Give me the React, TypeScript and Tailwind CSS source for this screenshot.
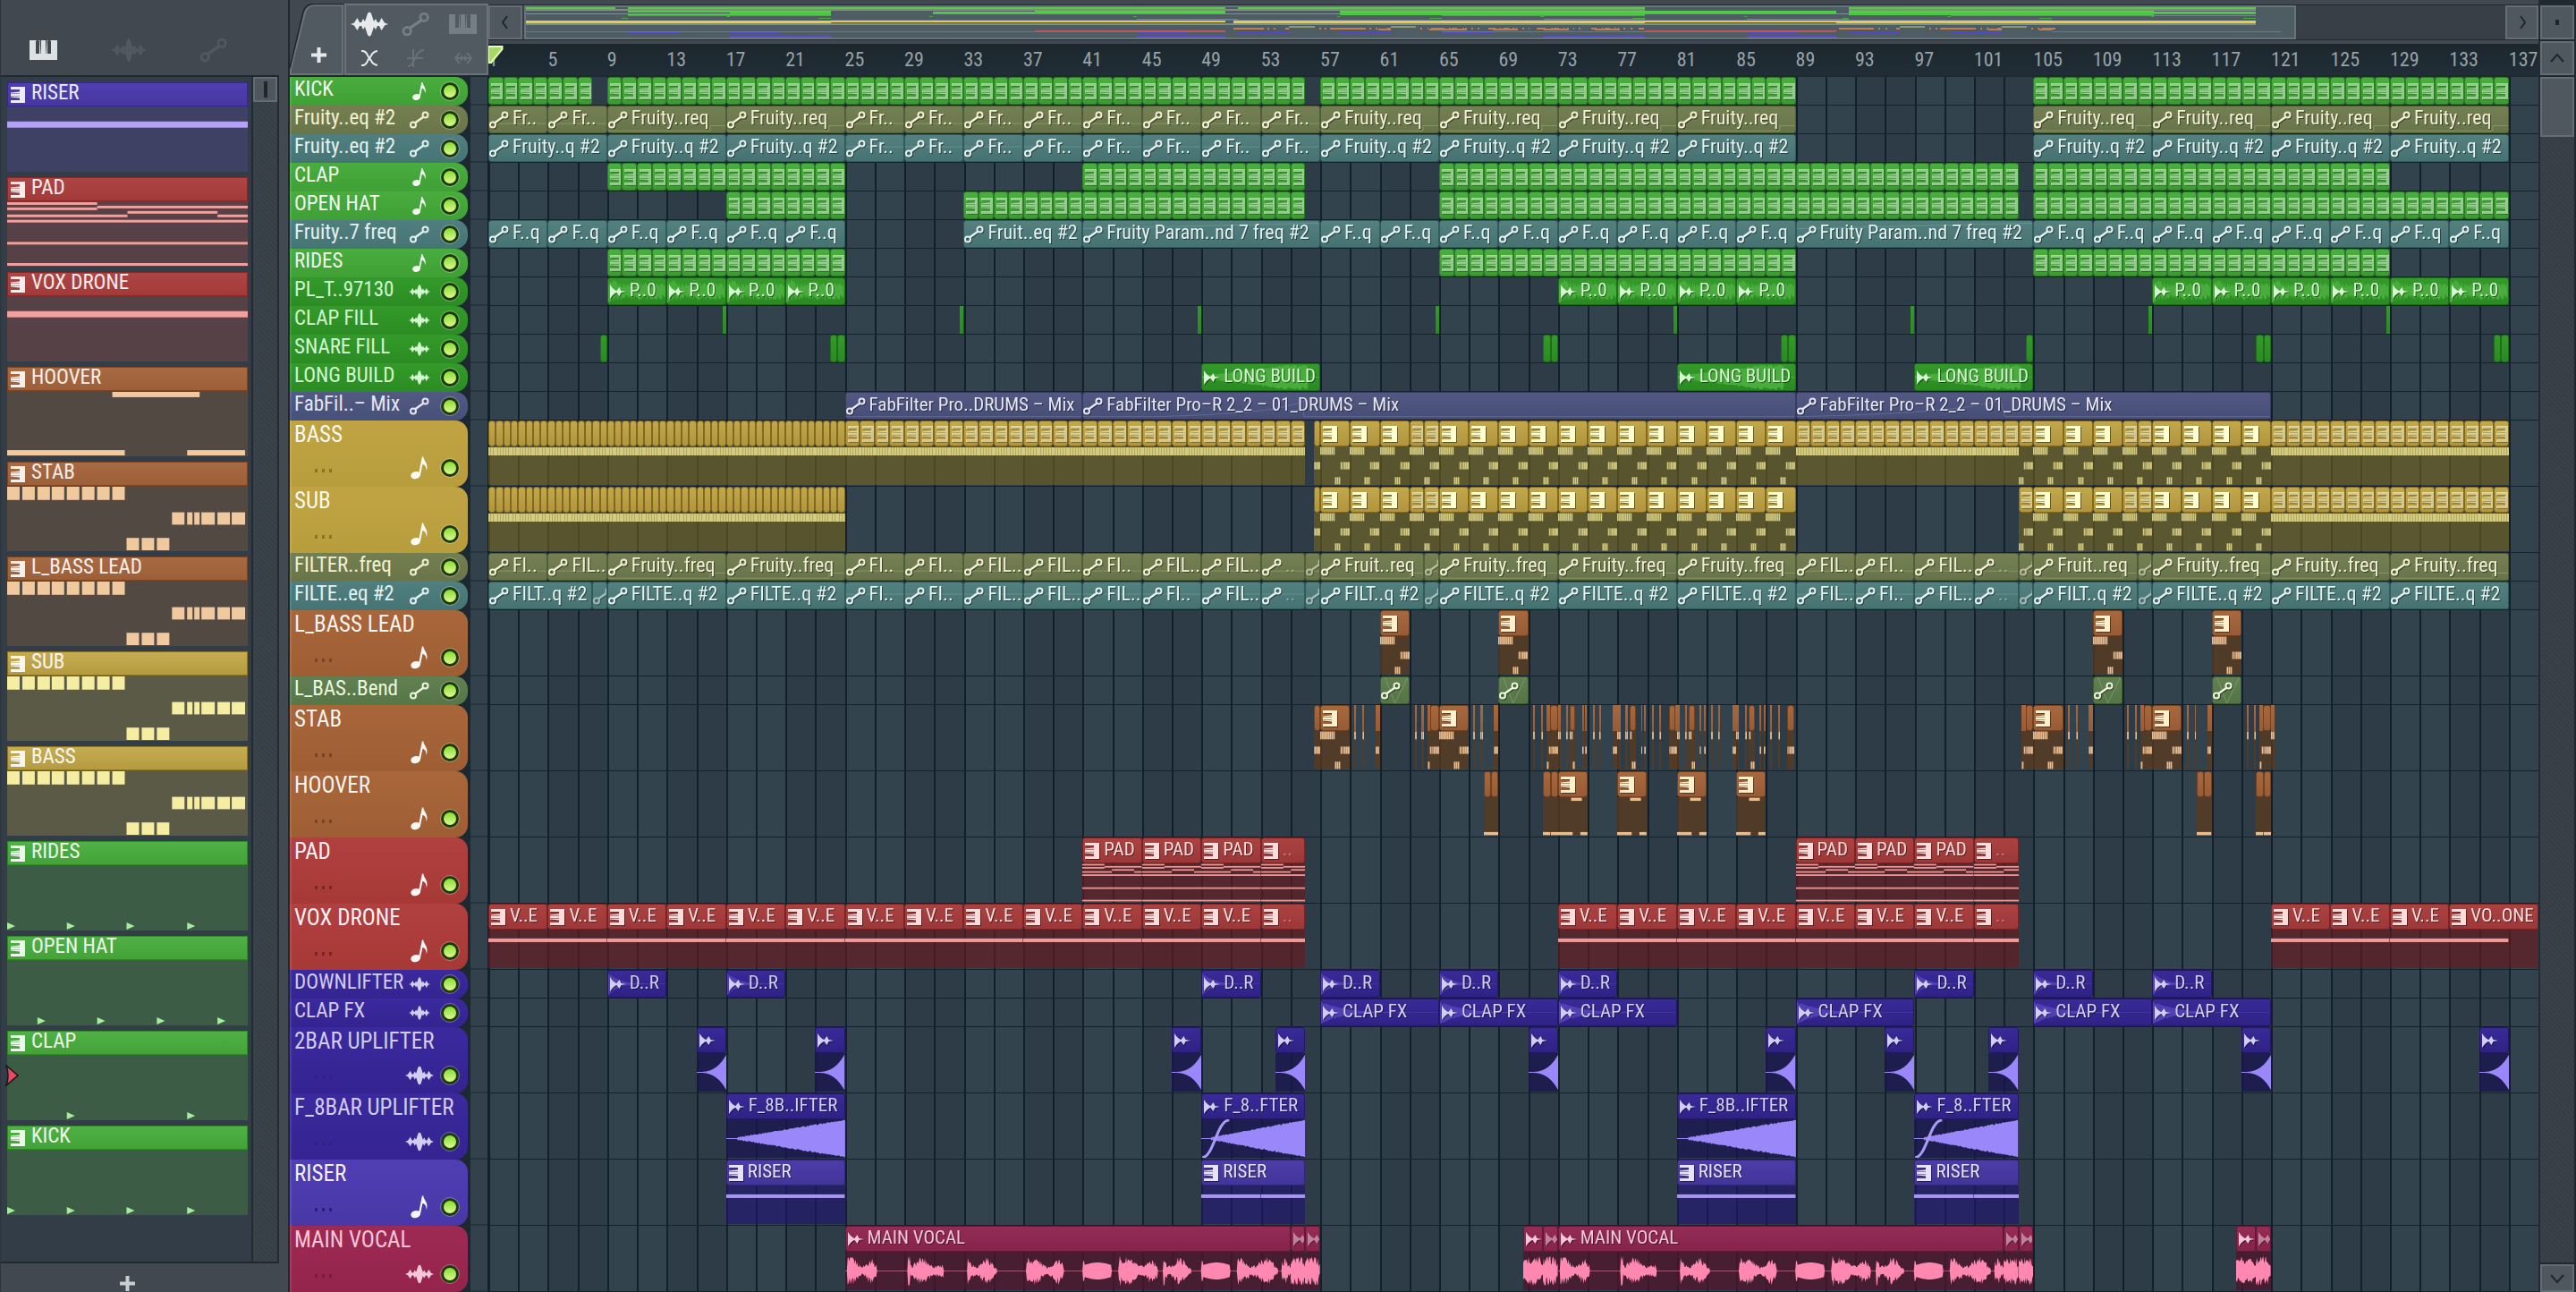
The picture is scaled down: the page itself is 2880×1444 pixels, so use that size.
import { ReactNode } from "react"
import clsx from "clsx"

type Kind = "pattern" | "auto" | "audio"
type Art = "bassline" | "dense" | "hoover" | "low" | "pad" | "hold" | "sweep" | "cone" | "vocal"

interface Clip {
    start: number,
    end: number,
    label?: string,
    art?: Art,
    fade?: boolean,
}

interface Track {
    name: string,
    kind: Kind,
    theme: string,
    tall?: boolean,
    clips: Clip[],
}

const BARS = 138

const THEMES: Record<string, { head: string, clip: string, body: string, note: string, text: string, dots: string, mini: string }> = {
    green: { head: "bg-linear-to-b from-[#49ad3e] to-[#3fa035]", clip: "bg-linear-to-b from-[#4bae40] to-[#3d9a33] border-[#2a7d22]", body: "bg-[#3d5c46]", note: "text-[#a4ee9c]", text: "text-[#d6ffd0]", dots: "bg-[#2a7d22]", mini: "#55c94b" },
    leaf: { head: "bg-linear-to-b from-[#339a2a] to-[#2b8c23]", clip: "bg-linear-to-b from-[#339a2a] to-[#2b8a23] border-[#1f6e19]", body: "bg-[#3d5c46]", note: "text-[#55c048]", text: "text-[#d4f8cf]", dots: "bg-[#1f6e19]", mini: "#3fae3c" },
    olive: { head: "bg-linear-to-b from-[#747f51] to-[#697548]", clip: "bg-linear-to-b from-[#757f53] to-[#67744a] border-[#525e37]", body: "bg-[#5a5a46]", note: "text-[#98a26e]", text: "text-[#f2f0d2]", dots: "bg-[#525e37]", mini: "#7f8c74" },
    teal: { head: "bg-linear-to-b from-[#517f80] to-[#457474]", clip: "bg-linear-to-b from-[#54807f] to-[#467372] border-[#315a5a]", body: "bg-[#3d5c5c]", note: "text-[#709c9b]", text: "text-[#e2f2f0]", dots: "bg-[#315a5a]", mini: "#6b9797" },
    slate: { head: "bg-linear-to-b from-[#525a83] to-[#465078]", clip: "bg-linear-to-b from-[#525882] to-[#474e76] border-[#363c60]", body: "bg-[#3d4166]", note: "text-[#6c739e]", text: "text-[#e4e6f4]", dots: "bg-[#363c60]", mini: "#6a7488" },
    gold: { head: "bg-linear-to-b from-[#c0a443] to-[#b89d3c]", clip: "bg-linear-to-b from-[#c2a84c] to-[#b0953e] border-[#84691c]", body: "bg-[#7c691c]/55", note: "text-[#d3cb82]", text: "text-[#ffffd0]", dots: "bg-[#8c741c]", mini: "#e6ca54" },
    rust: { head: "bg-linear-to-b from-[#a9663a] to-[#9e5e34]", clip: "bg-linear-to-b from-[#a8683e] to-[#975c36] border-[#75401c]", body: "bg-[#5c391f]/75", note: "text-[#e8bd90]", text: "text-[#fff0cc]", dots: "bg-[#7c4420]", mini: "#c87c4c" },
    moss: { head: "bg-linear-to-b from-[#628052] to-[#567646]", clip: "bg-linear-to-b from-[#628052] to-[#557445] border-[#3f5c30]", body: "bg-[#3d5c46]", note: "text-[#86a176]", text: "text-[#ecf8dc]", dots: "bg-[#3f5c30]", mini: "#8c9c72" },
    red: { head: "bg-linear-to-b from-[#b14040] to-[#a63936]", clip: "bg-linear-to-b from-[#ab4242] to-[#9d3838] border-[#7d2222]", body: "bg-[#691a20]/65", note: "text-[#f09a98]", text: "text-[#ffdcdc]", dots: "bg-[#7f2220]", mini: "#c0565b" },
    indigo: { head: "bg-linear-to-b from-[#3b2a9e] to-[#342390]", clip: "bg-linear-to-b from-[#392a98] to-[#2f2286] border-[#231868]", body: "bg-[#1a1650]/80", note: "text-[#9a87fa]", text: "text-[#d2cdf2]", dots: "bg-[#302088]", mini: "#5448c4" },
    violet: { head: "bg-linear-to-b from-[#503eb4] to-[#4838a6]", clip: "bg-linear-to-b from-[#4c3ca8] to-[#42359a] border-[#30247c]", body: "bg-[#211470]/65", note: "text-[#a896ee]", text: "text-[#e8e2ff]", dots: "bg-[#2c1e80]", mini: "#5f5cc8" },
    rose: { head: "bg-linear-to-b from-[#9e2a54] to-[#94244b]", clip: "bg-linear-to-b from-[#942c56] to-[#86244a] border-[#661636]", body: "bg-[#4e162c]/80", note: "text-[#ff88b0]", text: "text-[#f4c6d8]", dots: "bg-[#7c1a3c]", mini: "#b04a72" },
}

// back-to-back clips of the same length
function run(start: number, end: number, step: number, label?: string, art?: Art): Clip[] {
    const result = []
    for (let bar = start; bar < end; bar += step) {
        result.push({ start: bar, end: bar + step, label, art })
    }
    return result
}

function spans(list: number[][], art?: Art): Clip[] {
    return list.map(([start, end]) => ({ start, end, art }))
}

function labels(start: number, step: number, names: string[]): Clip[] {
    return names.map((label, i) => ({ start: start + i * step, end: start + (i + 1) * step, label }))
}

const bassDrop = [
    ...spans([[56.6, 57]], "bassline"), ...run(57, 63, 2, "", "bassline"), ...run(63, 65, 1, undefined, "bassline"),
    ...run(65, 89, 2, "", "bassline"),
]
const bassDrop2 = [
    ...run(104, 105, 1, undefined, "bassline"), ...run(105, 111, 2, "", "bassline"), ...run(111, 113, 1, undefined, "bassline"),
    ...run(113, 121, 2, "", "bassline"), ...run(121, 137, 1, undefined, "dense"),
]
const leadBars = [61, 69, 109, 117]

const TRACKS: Track[] = [
    { name: "KICK", kind: "pattern", theme: "green", clips: [...run(1, 8, 1), ...run(9, 56, 1), ...run(57, 89, 1), ...run(105, 137, 1)] },
    {
        name: "Fruity..eq #2", kind: "auto", theme: "olive", clips: [
            ...run(1, 9, 4, "Fr.."), ...run(9, 25, 8, "Fruity..req"), ...run(25, 57, 4, "Fr.."),
            ...run(57, 89, 8, "Fruity..req"), ...run(105, 137, 8, "Fruity..req"),
        ]
    },
    {
        name: "Fruity..eq #2", kind: "auto", theme: "teal", clips: [
            ...run(1, 25, 8, "Fruity..q #2"), ...run(25, 57, 4, "Fr.."),
            ...run(57, 89, 8, "Fruity..q #2"), ...run(105, 137, 8, "Fruity..q #2"),
        ]
    },
    { name: "CLAP", kind: "pattern", theme: "green", clips: [...run(9, 25, 1), ...run(41, 56, 1), ...run(65, 104, 1), ...run(105, 129, 1)] },
    { name: "OPEN HAT", kind: "pattern", theme: "green", clips: [...run(17, 25, 1), ...run(33, 56, 1), ...run(65, 104, 1), ...run(105, 137, 1)] },
    {
        name: "Fruity..7 freq", kind: "auto", theme: "teal", clips: [
            ...run(1, 25, 4, "F..q"), ...run(33, 41, 8, "Fruit..eq #2"), ...run(41, 57, 16, "Fruity Param..nd 7 freq #2"),
            ...run(57, 89, 4, "F..q"), ...run(89, 105, 16, "Fruity Param..nd 7 freq #2"), ...run(105, 137, 4, "F..q"),
        ]
    },
    { name: "RIDES", kind: "pattern", theme: "green", clips: [...run(9, 25, 1), ...run(65, 89, 1), ...run(105, 129, 1)] },
    { name: "PL_T..97130", kind: "audio", theme: "leaf", clips: [...run(9, 25, 4, "P..0"), ...run(73, 89, 4, "P..0"), ...run(113, 137, 4, "P..0")] },
    { name: "CLAP FILL", kind: "audio", theme: "leaf", clips: spans([17, 33, 49, 65, 81, 97, 113, 129].map(bar => [bar - 0.25, bar])) },
    {
        name: "SNARE FILL", kind: "audio", theme: "leaf", clips: spans([
            [8.5, 9], [24, 24.5], [24.5, 25], [72, 72.5], [72.5, 73], [88, 88.5], [88.5, 89],
            [104.5, 105], [120, 120.5], [120.5, 121], [136, 136.5], [136.5, 137],
        ])
    },
    { name: "LONG BUILD", kind: "audio", theme: "leaf", clips: [49, 81, 97].flatMap(bar => run(bar, bar + 8, 8, "LONG BUILD")) },
    {
        name: "FabFil..– Mix", kind: "auto", theme: "slate", clips: [
            { start: 25, end: 41, label: "FabFilter Pro..DRUMS – Mix" },
            { start: 41, end: 89, label: "FabFilter Pro–R 2_2 – 01_DRUMS – Mix" },
            { start: 89, end: 121, label: "FabFilter Pro–R 2_2 – 01_DRUMS – Mix" },
        ]
    },
    { name: "BASS", kind: "pattern", theme: "gold", tall: true, clips: [...run(1, 25, 0.5, undefined, "dense"), ...run(25, 56, 1, undefined, "dense"), ...bassDrop, ...run(89, 104, 1, undefined, "dense"), ...bassDrop2] },
    { name: "SUB", kind: "pattern", theme: "gold", tall: true, clips: [...run(1, 25, 0.5, undefined, "dense"), ...bassDrop, ...bassDrop2] },
    {
        name: "FILTER..freq", kind: "auto", theme: "olive", clips: [
            ...labels(1, 4, ["FI..", "FIL.."]), ...run(9, 25, 8, "Fruity..freq"),
            ...labels(25, 4, ["FI..", "FI..", "FIL..", "FIL..", "FI..", "FIL..", "FIL.."]),
            { start: 53, end: 56, label: "..", fade: true }, { start: 56, end: 57 },
            { start: 57, end: 64, label: "Fruit..req" }, { start: 64, end: 65 }, ...run(65, 89, 8, "Fruity..freq"),
            ...labels(89, 4, ["FIL..", "FI..", "FIL.."]), { start: 101, end: 104, label: "..", fade: true }, { start: 104, end: 105 },
            { start: 105, end: 112, label: "Fruit..req" }, { start: 112, end: 113 }, ...run(113, 137, 8, "Fruity..freq"),
        ]
    },
    {
        name: "FILTE..eq #2", kind: "auto", theme: "teal", clips: [
            { start: 1, end: 8, label: "FILT..q #2" }, { start: 8, end: 9 }, ...run(9, 25, 8, "FILTE..q #2"),
            ...labels(25, 4, ["FI..", "FI..", "FIL..", "FIL..", "FIL..", "FI..", "FIL.."]),
            { start: 53, end: 56, label: "..", fade: true }, { start: 56, end: 57 },
            { start: 57, end: 64, label: "FILT..q #2" }, { start: 64, end: 65 }, ...run(65, 89, 8, "FILTE..q #2"),
            ...labels(89, 4, ["FIL..", "FI..", "FIL.."]), { start: 101, end: 104, label: "..", fade: true }, { start: 104, end: 105 },
            { start: 105, end: 112, label: "FILT..q #2" }, { start: 112, end: 113 }, ...run(113, 137, 8, "FILTE..q #2"),
        ]
    },
    { name: "L_BASS LEAD", kind: "pattern", theme: "rust", tall: true, clips: leadBars.flatMap(bar => run(bar, bar + 2, 2, "", "bassline")) },
    { name: "L_BAS..Bend", kind: "auto", theme: "moss", clips: leadBars.flatMap(bar => run(bar, bar + 2, 2, "")) },
    {
        name: "STAB", kind: "pattern", theme: "rust", tall: true, clips: [
            ...[57, 65, 105, 113].flatMap(bar => run(bar, bar + 2, 2, "", "bassline")),
            ...spans([
                [56.6, 57], [59.3, 59.42], [59.8, 59.95], [60.7, 61], [63.35, 63.5], [63.8, 63.95], [64.2, 64.4], [64.4, 65],
                [67.3, 67.42], [67.8, 67.98], [68.7, 69], [71.35, 71.47], [71.85, 71.97], [72.2, 72.48], [72.48, 73], [73, 73.22],
                [73.55, 73.7], [73.8, 74.17], [74.62, 74.74], [74.84, 74.96], [75.33, 75.45], [75.8, 75.93],
                [76.7, 76.94], [76.94, 77.2], [77.55, 77.68], [77.85, 78.27], [78.58, 78.7], [78.82, 78.94], [79.33, 79.45], [79.8, 79.93],
                [80.45, 80.92], [80.92, 81.2], [81.58, 81.7], [81.82, 82.24], [82.55, 82.67], [82.85, 82.97], [83.33, 83.45], [83.8, 83.93],
                [84.73, 84.97], [84.97, 85.2], [85.58, 85.7], [85.82, 86.26], [86.58, 86.7], [86.84, 86.96], [87.3, 87.42], [87.85, 87.97], [88.45, 88.92],
                [104.2, 104.5], [104.5, 105], [107.33, 107.45], [107.9, 108.02], [108.7, 109], [111.33, 111.45], [111.85, 111.97], [112.2, 112.45], [112.45, 113],
                [115.33, 115.45], [115.85, 115.97], [116.7, 117], [119.35, 119.47], [119.85, 119.97], [120.2, 120.45], [120.45, 121], [121, 121.25],
            ], "bassline"),
        ]
    },
    {
        name: "HOOVER", kind: "pattern", theme: "rust", tall: true, clips: [
            ...[68, 72, 116, 120].flatMap(bar => run(bar, bar + 1, 0.5, undefined, "low")),
            ...[73, 77, 81, 85].flatMap(bar => run(bar, bar + 2, 2, "", "hoover")),
        ]
    },
    {
        name: "PAD", kind: "pattern", theme: "red", tall: true, clips: [41, 89].flatMap(bar => [
            ...run(bar, bar + 12, 4, "PAD", "pad"), { start: bar + 12, end: bar + 15, label: "..", fade: true, art: "pad" as Art },
        ])
    },
    {
        name: "VOX DRONE", kind: "pattern", theme: "red", tall: true, clips: [
            ...run(1, 53, 4, "V..E", "hold"), { start: 53, end: 56, label: "..", fade: true, art: "hold" },
            ...run(73, 101, 4, "V..E", "hold"), { start: 101, end: 104, label: "..", fade: true, art: "hold" },
            ...run(121, 133, 4, "V..E", "hold"), { start: 133, end: 139, label: "VO..ONE", art: "hold" },
        ]
    },
    { name: "DOWNLIFTER", kind: "audio", theme: "indigo", clips: [9, 17, 49, 57, 65, 73, 97, 105, 113].flatMap(bar => run(bar, bar + 4, 4, "D..R")) },
    { name: "CLAP FX", kind: "audio", theme: "indigo", clips: [57, 65, 73, 89, 105, 113].flatMap(bar => run(bar, bar + 8, 8, "CLAP FX")) },
    { name: "2BAR UPLIFTER", kind: "audio", theme: "indigo", tall: true, clips: [15, 23, 47, 54, 71, 87, 95, 102, 119, 135].flatMap(bar => run(bar, bar + 2, 2, "", "sweep")) },
    {
        name: "F_8BAR UPLIFTER", kind: "audio", theme: "indigo", tall: true, clips: [
            { start: 17, end: 25, label: "F_8B..IFTER", art: "cone" }, { start: 49, end: 56, label: "F_8..FTER", art: "cone" },
            { start: 81, end: 89, label: "F_8B..IFTER", art: "cone" }, { start: 97, end: 104, label: "F_8..FTER", art: "cone" },
        ]
    },
    { name: "RISER", kind: "pattern", theme: "violet", tall: true, clips: [[17, 25], [49, 56], [81, 89], [97, 104]].map(([start, end]) => ({ start, end, label: "RISER", art: "hold" as Art })) },
    {
        name: "MAIN VOCAL", kind: "audio", theme: "rose", tall: true, clips: [
            { start: 25, end: 55, label: "MAIN VOCAL", art: "vocal" }, ...run(55, 57, 1, undefined, "vocal"),
            { start: 70.67, end: 72, label: "", art: "vocal" }, ...run(72, 73, 1, undefined, "vocal"),
            { start: 73, end: 103, label: "MAIN VOCAL", art: "vocal" }, ...run(103, 105, 1, undefined, "vocal"),
            { start: 118.63, end: 120, label: "", art: "vocal" }, ...run(120, 121, 1, undefined, "vocal"),
        ]
    },
]

interface Pattern {
    name: string,
    head: string,
    body: string,
    note: string,
    art?: Art,
    hits?: number[],
}

const green = { head: "bg-linear-to-b from-[#4fb045] to-[#43a338] border-[#2f8a26]", body: "bg-[#3d5c46]", note: "text-[#a4ee9c]" }
const gold = { head: "bg-linear-to-b from-[#c5ac52] to-[#b59b40] border-[#8f751f]", body: "bg-[#5a5a46]", note: "text-[#f5eea2]" }
const rust = { head: "bg-linear-to-b from-[#a86a42] to-[#9c5f38] border-[#7e4420]", body: "bg-[#534943]", note: "text-[#f1c99e]" }
const red = { head: "bg-linear-to-b from-[#ad4545] to-[#a33a3a] border-[#8a2828]", body: "bg-[#564147]", note: "text-[#f0a09e]" }

const PATTERNS: Pattern[] = [
    { name: "RISER", head: "bg-linear-to-b from-[#4f3fb0] to-[#4736a2] border-[#35288a]", body: "bg-[#3f4164]", note: "text-[#b4a2f6]", art: "hold" },
    { name: "PAD", ...red, art: "pad" },
    { name: "VOX DRONE", ...red, art: "hold" },
    { name: "HOOVER", ...rust, art: "hoover" },
    { name: "STAB", ...rust, art: "bassline" },
    { name: "L_BASS LEAD", ...rust, art: "bassline" },
    { name: "SUB", ...gold, art: "bassline" },
    { name: "BASS", ...gold, art: "bassline" },
    { name: "RIDES", ...green, hits: [0, 67, 134, 202] },
    { name: "OPEN HAT", ...green, hits: [34, 101, 168, 236] },
    { name: "CLAP", ...green, hits: [67, 202] },
    { name: "KICK", ...green, hits: [0, 67, 134, 202] },
]

// x, y, width, height in a 270 x 74 box
const NOTES: Partial<Record<Art, number[][]>> = {
    bassline: [
        ...[0, 17, 34, 50, 67, 84, 101, 118].map(x => [x, 1, 14, 15]),
        [185, 30, 14, 14], [202, 30, 6, 14], [210, 30, 6, 14], [218, 30, 15, 14], [236, 30, 14, 14], [252, 30, 15, 14],
        ...[134, 151, 168].map(x => [x, 59, 14, 14]),
    ],
    hoover: [[118, 1, 98, 6], [0, 67, 132, 6], [202, 67, 65, 6]],
    low: [[0, 67, 270, 6]],
    pad: [
        [0, 1, 101, 3], [0, 7, 101, 3], [101, 5, 169, 3], [135, 11, 101, 3], [0, 15, 135, 3], [236, 15, 34, 3],
        [0, 21, 270, 3], [0, 46, 270, 3], [0, 70, 270, 3],
    ],
    hold: [[0, 17, 270, 7]],
}
const PERIOD: Partial<Record<Art, number>> = { bassline: 2, hoover: 2, low: 0.5, pad: 4, hold: 4 }

function noise(i: number) {
    const v = Math.sin(i * 127.1 + 311.7) * 43758.5453
    return v - Math.floor(v)
}

// mirrored outline round the middle of a 100 x 100 box
function outline(steps: number, level: (t: number, i: number) => number) {
    const top = []
    const bottom = []
    for (let i = 0; i <= steps; i++) {
        const t = i / steps
        const x = (t * 100).toFixed(2)
        top.push(`${x},${(50 - 48 * level(t, i)).toFixed(1)}`)
        bottom.unshift(`${x},${(50 + 48 * level(t, i + 7)).toFixed(1)}`)
    }
    return `M${top.join("L")}L${bottom.join("L")}Z`
}

const SWEEP = outline(40, t => 0.02 + 0.95 * Math.pow(t, 3))
const CONE = outline(110, (t, i) => t < 0.1 ? 0.02 : Math.min(1, 0.02 + (t - 0.08) * 1.03 + noise(i) * 0.07))
const BUSY = outline(70, (t, i) => 0.25 + 0.7 * noise(i) * (1 - (t * 2 % 1) * 0.4))
const BUILD = outline(90, (t, i) => t > 0.9 ? 0.04 : Math.min(1, 0.1 + t * 1.3) * (0.8 + 0.2 * noise(i)))
const FALL = outline(50, (t, i) => 0.02 + Math.pow(1 - t, 5) * (0.7 + 0.2 * noise(i)))

// phrases of the vocal take, in bars from its first bar
const PHRASES = [
    [0.15, 2.1, 0], [4.2, 6.6, 0], [8.2, 10.2, 0], [12.2, 14.7, 0], [16, 17.9, 1], [18.4, 21, 0], [21.4, 23.3, 0],
    [24, 25.9, 1], [26.4, 29.1, 0], [29.4, 30, 0],
]
function vocalPath(start: number, end: number) {
    if (end - start < 5) {
        return outline(22, (t, i) => (0.35 + 0.45 * noise(i + start)) * (t > 0.9 ? 0.5 : 1))
    }
    return outline(560, (t, i) => {
        const bar = t * (end - start)
        const phrase = PHRASES.find(p => bar >= p[0] && bar <= p[1])
        if (!phrase) return 0.015
        const k = (bar - phrase[0]) / (phrase[1] - phrase[0])
        if (phrase[2]) return k < 0.05 ? 0.55 : 0.3 + 0.16 * Math.sin(k * 3)
        const swell = k < 0.06 ? 1.25 : 0.8 + 0.35 * Math.sin(k * 9 + phrase[0])
        return swell * (0.3 + 0.38 * noise(i)) * (k > 0.9 ? 0.6 : 1)
    })
}

function PianoIcon(props: { className?: string }) {
    return (
        <svg viewBox="0 0 31 22" className={props.className} fill="currentColor" aria-hidden="true">
            <path d="M0 0H8L7 1V15H11V1L10 0H11.500L12.500 15H13V0H18V15H18.500L19.500 0H21L20 1V15H24V1L23 0H31V22H0Z" />
        </svg>
    )
}

function KeysIcon(props: { className?: string }) {
    return (
        <svg viewBox="0 0 16 18" className={props.className} fill="currentColor" aria-hidden="true">
            <path d="M0 0H16V18H0V15H10V12.500L0 11.500V11H10V10.500H0V7.500H10V7H0V6.500L10 5.500V3H0Z" />
        </svg>
    )
}

function NodeIcon(props: { className?: string }) {
    return (
        <svg viewBox="0 0 22 20" className={props.className} fill="none" stroke="currentColor" strokeWidth="2" aria-hidden="true">
            <circle cx="4" cy="15.500" r="3" />
            <circle cx="17.500" cy="4.500" r="3" />
            <path d="M6.200 13.200L15.300 6.800" strokeWidth="2.400" />
        </svg>
    )
}

function WaveIcon(props: { className?: string }) {
    return (
        <svg viewBox="0 0 42 28" className={props.className} fill="currentColor" aria-hidden="true">
            <path d="M0 14L4 12.500L7.500 7L10 12L12 12L14 8L16 11L19 2Q21 -1 23 2L26 11L28 8L30 12L32 12L34.500 7L38 12.500L42 14L38 15.500L34.500 21L32 16L30 16L28 20L26 17L23 26Q21 29 19 26L16 17L14 20L12 16L10 16L7.500 21L4 15.500Z" />
        </svg>
    )
}

function SampleIcon(props: { className?: string }) {
    return (
        <svg viewBox="0 0 18 16" className={props.className} fill="currentColor" aria-hidden="true">
            <path d="M0 0L3 4L6 6.500L7.500 7L10.500 3L12.500 7L18 8L12.500 9L10.500 13L7.500 9L6 9.500L3 12L0 16Z" />
        </svg>
    )
}

function NoteIcon(props: { className?: string }) {
    return (
        <svg viewBox="0 0 16 20" className={props.className} fill="currentColor" aria-hidden="true">
            <ellipse cx="4.500" cy="16.500" rx="4.300" ry="3.300" transform="rotate(-15 4.500 16.500)" />
            <path d="M7 16.500L10.300 0H11.500C11.500 3.500 16.500 6 14.200 12.500C14.200 9 13 7.500 10.800 6.500L8.700 16.500Z" />
        </svg>
    )
}

function Art(props: { clip: Clip, note: string }) {
    const { start, end, art } = props.clip
    if (!art) return null
    if (art === "dense") {
        return <div className="mt-px h-[9px] bg-[repeating-linear-gradient(90deg,#d3cb82_0_2px,#b4ab62_2px_3px)]"></div>
    }
    if (art === "sweep" || art === "cone" || art === "vocal") {
        const d = art === "sweep" ? SWEEP : art === "cone" ? CONE : vocalPath(start, end)
        return (
            <svg viewBox="0 0 100 100" preserveAspectRatio="none" className={clsx("absolute inset-0 size-full", props.note)} fill="currentColor" aria-hidden="true">
                <path d={d} />
                {art === "cone" && end - start === 7 && <path d="M1 99C12 99 15 2 27 2" fill="none" stroke="#a99bf8" strokeWidth="3" vectorEffect="non-scaling-stroke" />}
            </svg>
        )
    }
    const period = PERIOD[art] ?? 2
    const origin = art === "bassline" ? 1 + Math.floor((start - 1) / period) * period : start
    const result = []
    for (let bar = origin; bar < Math.min(end, 137); bar += period) {
        result.push(
            <svg key={bar} viewBox="0 0 270 74" preserveAspectRatio="none" fill="currentColor" aria-hidden="true"
                className={clsx("absolute top-0 h-full", props.note)}
                style={{ left: `${(bar - start) / (end - start) * 100}%`, width: `${period / (end - start) * 100}%` }}>
                {NOTES[art]?.map(([x, y, w, h]) => <rect key={`${x}-${y}`} x={x} y={y} width={w} height={h} />)}
            </svg>
        )
    }
    return <>{result}</>
}

function Curve(props: { track: Track, clip: Clip }) {
    const bars = props.clip.end - props.clip.start
    const theme = props.track.theme
    let d = ""
    if (props.track.kind === "audio") {
        if (props.clip.label && !props.track.tall) d = props.track.name === "LONG BUILD" ? BUILD : theme === "leaf" ? BUSY : FALL
    } else if (theme === "moss") d = "M15 0L50 100L95 0"
    else if (theme === "slate") d = bars === 48 ? "M0 92H10Q28 80 31 30V92H100" : bars === 32 ? "M0 92Q34 80 43 28L44 92H100" : "M0 92H100"
    else if (bars === 16) d = "M0 30L100 8"
    else if (theme === "olive") d = bars >= 7 ? "M0 94H87V74H100" : "M0 66H100"
    else if (theme === "teal" && bars >= 3 && bars < 7 && props.clip.label !== "F..q") d = "M0 45H100"
    if (!d) return null
    const filled = props.track.kind === "audio"
    return (
        <svg viewBox="0 0 100 100" preserveAspectRatio="none" aria-hidden="true"
            className={clsx("absolute inset-0 size-full", filled ? theme === "leaf" ? "text-[#48ad3c]" : "text-[#5140b4]" : THEMES[theme].note)}>
            <path d={d} fill={filled ? "currentColor" : "none"} stroke={filled ? "none" : "currentColor"} strokeOpacity="0.7" vectorEffect="non-scaling-stroke" />
        </svg>
    )
}

function ClipBlock(props: { track: Track, clip: Clip }) {
    const { track, clip } = props
    const theme = THEMES[track.theme]
    const bars = clip.end - clip.start
    const named = clip.label !== undefined
    const Icon = track.kind === "pattern" ? KeysIcon : track.kind === "auto" ? NodeIcon : SampleIcon
    const iconSize = track.kind === "pattern" ? "w-4 h-[18px] mr-px" : track.kind === "auto" ? "w-[22px] h-5 -ml-0.5" : "w-[18px] h-4"
    const textSize = track.kind === "auto" && track.theme !== "slate" ? "text-[22px]" : "text-[21px]"
    return (
        <div className="absolute inset-y-0 flex flex-col"
            style={{ left: `${(clip.start - 1) / BARS * 100}%`, width: `${bars / BARS * 100}%` }}>
            <div className={clsx("relative flex items-center overflow-hidden", theme.clip, theme.text,
                bars < 0.3 ? "border-0" : "rounded-[3px] border", track.tall ? "h-[29px] flex-none" : "h-[31px]")}>
                <Curve track={track} clip={clip} />
                {bars >= 1 &&
                    <div className="relative flex min-w-0 flex-1 items-center gap-1 overflow-hidden pl-0.5 drop-shadow-[1px_1px_0_rgba(0,0,0,0.45)]">
                        <Icon className={clsx("flex-none", iconSize, !named && "opacity-60")} />
                        {clip.label && <span className={clsx("whitespace-nowrap pb-1 leading-6", textSize, clip.fade && "opacity-40")}>{clip.label}</span>}
                    </div>}
            </div>
            {track.tall &&
                <div className={clsx("relative mb-px flex-1 overflow-hidden", theme.body)}>
                    <Art clip={clip} note={theme.note} />
                </div>}
        </div>
    )
}

function TrackRow(props: { track: Track }) {
    const { track } = props
    const theme = THEMES[track.theme]
    const Icon = track.kind === "pattern" ? NoteIcon : track.kind === "auto" ? NodeIcon : WaveIcon
    const iconSize = track.kind === "pattern" ? (track.tall ? "w-5 h-[26px]" : "w-4 h-5") : track.kind === "auto" ? "w-6 h-5" : track.tall ? "w-8 h-6" : "w-6 h-[18px]"
    return (
        <div className={clsx("flex flex-none", track.tall ? "h-[74px]" : "h-8")}>
            <div className={clsx("relative flex w-[199px] flex-none justify-between rounded-r-[14px] border-l-2 border-white/10 pl-[3px] pr-2.5",
                theme.head, track.kind === "pattern" ? "text-white/95" : theme.text, track.tall ? "items-end" : "items-center")}>
                <span className={clsx("whitespace-nowrap", track.tall ? "self-start text-[25px] leading-8" : "pb-1 text-[23px] leading-6")}>{track.name}</span>
                {track.tall && <span className="absolute bottom-4 left-[26px] flex gap-[5px]" aria-hidden="true">
                    {[0, 1, 2].map(i => <i key={i} className={clsx("h-1 w-[3px]", theme.dots)}></i>)}
                </span>}
                <span className={clsx("flex items-center", track.tall ? "absolute bottom-2 right-2.5" : "")}>
                    <span className="flex w-9 justify-center"><Icon className={iconSize} /></span>
                    <input type="checkbox" defaultChecked aria-label={`${track.name} on`}
                        className="ml-1.5 size-5 appearance-none rounded-full border-[3px] border-[#1d3a0c] bg-linear-to-b from-[#86dc2c] to-[#dcf88c] outline-1 outline-white/30" />
                </span>
            </div>
            <div className="w-[3px] flex-none"></div>
            <div className="w-[19px] flex-none border-b-2 border-[#263440] bg-[#33414c]"></div>
            <div className="w-px flex-none bg-[#14212a]"></div>
            <div className="relative min-w-0 flex-1 overflow-hidden border-b border-[#14222b]">
                {track.clips.map((clip, i) => <ClipBlock key={i} track={track} clip={clip} />)}
            </div>
        </div>
    )
}

function GridLines() {
    const cells = []
    for (let i = 0; i < BARS / 2; i++) {
        cells.push(<div key={i} className={clsx("flex-1 border-l-2 border-[#11202a]", i % 4 < 2 ? "bg-[#33434d]" : "bg-[#2d3c46]")}></div>)
    }
    return <div className="absolute inset-y-0 left-[222px] right-0 flex">{cells}</div>
}

function PatternItem(props: { pattern: Pattern, selected?: boolean }) {
    const { pattern } = props
    return (
        <li className="relative flex-none">
            <button className="block h-[100px] w-full text-left">
                <span className={clsx("flex h-[27px] items-center gap-[7px] border pl-[3px] text-white/90", pattern.head)}>
                    <KeysIcon className="h-[18px] w-4" />
                    <span className="pb-1 text-[23px] leading-6">{pattern.name}</span>
                </span>
                <span className={clsx("relative block h-[73px] overflow-hidden", pattern.body)}>
                    <svg viewBox="0 0 270 74" preserveAspectRatio="none" className={clsx("absolute inset-0 size-full", pattern.note)} fill="currentColor" aria-hidden="true">
                        {pattern.art && NOTES[pattern.art]?.map(([x, y, w, h]) => <rect key={`${x}-${y}`} x={x} y={y} width={w} height={h} />)}
                        {pattern.hits?.map(x => <path key={x} d={`M${x} 65L${x + 9} 69L${x} 73Z`} />)}
                    </svg>
                </span>
            </button>
            {props.selected &&
                <svg viewBox="0 0 15 24" className="absolute -left-0.5 top-[38px] h-6 w-[15px]" aria-hidden="true">
                    <path d="M1 1Q5 12 1 23L14 12Z" fill="#f0455f" stroke="#0e1820" strokeWidth="1.500" />
                </svg>}
        </li>
    )
}

function Browser() {
    return (
        <aside className="flex w-[312px] flex-none flex-col border-l border-[#2c353d] bg-[#41484f]">
            <div className="flex h-[84px] flex-none items-center pt-7">
                <button className="flex w-[95px] justify-center text-[#dde1e4]" aria-label="Patterns"><PianoIcon className="h-[22px] w-[31px]" /></button>
                <button className="flex w-[95px] justify-center text-[#505960]" aria-label="Audio clips"><WaveIcon className="h-7 w-10" /></button>
                <button className="flex w-[95px] justify-center text-[#505960]" aria-label="Automation clips"><NodeIcon className="h-7 w-8" /></button>
            </div>
            <div className="flex flex-1 border-y-2 border-[#20292f] bg-[#333d47]">
                <ul className="flex flex-1 flex-col gap-1.5 pl-[7px] pr-1 pt-1.5">
                    {PATTERNS.map(pattern => <PatternItem key={pattern.name} pattern={pattern} selected={pattern.name === "CLAP"} />)}
                </ul>
                <div className="w-[31px] flex-none border-x-2 border-[#222b32] bg-[repeating-linear-gradient(45deg,#363f46_0_2px,#3a434a_2px_4px)]">
                    <button className="flex h-7 w-full items-center justify-center border-2 border-[#646c73] bg-[#4f575e]" aria-label="Scroll patterns">
                        <span className="h-[18px] w-1 bg-[#1f272d]"></span>
                    </button>
                </div>
            </div>
            <button className="flex h-8 w-full flex-none justify-center pr-7 pt-3.5 text-[#c9cfd3]" aria-label="Add pattern"><Plus /></button>
        </aside>
    )
}

function Plus() {
    return <svg viewBox="0 0 17 17" className="size-[17px]" fill="currentColor" aria-hidden="true"><path d="M6.500 0H10.500V6.500H17V10.500H10.500V17H6.500V10.500H0V6.500H6.500Z" /></svg>
}

function Tools() {
    return (
        <div className="flex h-[86px] w-[222px] flex-none border-b-2 border-[#20292f] pt-1">
            <button className="relative flex w-[61px] items-end justify-center pb-3.5 pl-1 text-[#e6eaec]" aria-label="Add track">
                <svg viewBox="0 0 61 80" preserveAspectRatio="none" className="absolute inset-0 size-full" aria-hidden="true">
                    <path d="M1 79L1 74L17 10Q20 2 27 2H59V79Z" fill="#515a60" stroke="#6b7379" strokeWidth="2" />
                    <path d="M0 72L15 9Q18 0.500 27 0.500H60" fill="none" stroke="#20292f" strokeWidth="1.500" />
                </svg>
                <span className="relative"><Plus /></span>
            </button>
            <div className="grid flex-1 grid-cols-3 place-items-center border-2 border-[#6b7379] bg-[#515a60] text-[#757e84]">
                <button className="text-[#e6eaec]" aria-label="Audio"><WaveIcon className="h-7 w-[42px]" /></button>
                <button aria-label="Automation"><NodeIcon className="h-7 w-8" /></button>
                <button aria-label="Pattern"><PianoIcon className="h-[22px] w-[31px]" /></button>
                <button className="text-[#e6eaec]" aria-label="Auto crossfade">
                    <svg viewBox="0 0 18 18" className="size-[18px]" fill="none" stroke="currentColor" strokeWidth="2" aria-hidden="true">
                        <path d="M0 1H2C7 2 6 6 9 9C12 12 11 16 18 17M0 17H2C7 16 6 12 9 9C12 6 11 2 18 1" />
                    </svg>
                </button>
                <button className="text-[#687177]" aria-label="Snap curve">
                    <svg viewBox="0 0 20 20" className="size-5" fill="none" stroke="currentColor" strokeWidth="2" aria-hidden="true">
                        <path d="M0 10H18M7 0V20M1 19C10 19 8 1 19 1" />
                    </svg>
                </button>
                <button className="text-[#687177]" aria-label="Stretch">
                    <svg viewBox="0 0 20 14" className="h-3.5 w-5" fill="none" stroke="currentColor" strokeWidth="2" aria-hidden="true">
                        <path d="M6 1L1 7L6 13M14 1L19 7L14 13M2 7H18M8 4V10M12 4V10" />
                    </svg>
                </button>
            </div>
        </div>
    )
}

function ScrollButton(props: { label: string, className: string, children: ReactNode }) {
    return (
        <button aria-label={props.label} className={clsx("flex flex-none items-center justify-center border-2 border-[#656d74] bg-[#50585f] text-[#1f272d]", props.className)}>
            {props.children}
        </button>
    )
}

function Chevron(props: { d: string }) {
    return <svg viewBox="0 0 16 16" className="size-4" fill="none" stroke="currentColor" strokeWidth="2" aria-hidden="true"><path d={props.d} /></svg>
}

function Overview() {
    return (
        <div className="h-[38px] w-[89.5%] border-2 border-[#67747b] bg-[#4e5c64]">
            <svg viewBox="0 0 139 27" preserveAspectRatio="none" shapeRendering="crispEdges" className="size-full" aria-hidden="true">
                {TRACKS.map((track, row) => track.clips.map((clip, i) =>
                    <rect key={`${row}-${i}`} x={clip.start - 1} y={row + 0.3} width={clip.end - clip.start} height={track.tall || track.theme === "green" ? 1.2 : 0.8} fill={THEMES[track.theme].mini} />
                ))}
            </svg>
        </div>
    )
}

function Ruler() {
    const numbers = []
    for (let bar = 1; bar <= 137; bar += 4) {
        numbers.push(
            <span key={bar} className="absolute top-0 text-[22px] leading-9" style={{ left: `${(bar - 1) / BARS * 100}%` }}>{bar}</span>
        )
    }
    return (
        <div className="relative mt-1 h-[35px] overflow-hidden bg-linear-to-b from-[#1c262d] to-[#212e37] text-[#97a2a8]">
            {numbers}
            <svg viewBox="0 0 17 20" className="absolute left-0 top-0.5 h-5 w-[17px]" aria-hidden="true">
                <path d="M0 1H15.500V4L3 19H0Z" fill="#a7d86a" stroke="#e9ffb4" strokeWidth="2" />
            </svg>
        </div>
    )
}

export default function App() {
    return (
        <div className="flex min-h-screen w-full overflow-hidden bg-[#41484f] font-['Roboto_Condensed','Roboto','Liberation_Sans',sans-serif]">
            <Browser />
            <div className="w-3 flex-none border-r-2 border-[#20292f] bg-[#434950]"></div>
            <main className="flex min-w-0 flex-1 flex-col">
                <div className="flex flex-none">
                    <Tools />
                    <div className="flex h-[86px] min-w-0 flex-1 flex-col border-b-2 border-[#20292f]">
                        <div className="mt-[5px] flex h-10 gap-0.5 border-y border-[#20292f] bg-[#383f46]">
                            <ScrollButton label="Scroll left" className="h-[38px] w-[38px]"><Chevron d="M10 1L5 8L10 15" /></ScrollButton>
                            <div className="min-w-0 flex-1"><Overview /></div>
                            <ScrollButton label="Scroll right" className="h-[38px] w-[37px]"><Chevron d="M6 1L11 8L6 15" /></ScrollButton>
                        </div>
                        <Ruler />
                    </div>
                </div>
                <div className="relative flex flex-1 flex-col bg-[#1c2931]">
                    <GridLines />
                    <div className="relative flex flex-col">
                        {TRACKS.map((track, i) => <TrackRow key={i} track={track} />)}
                    </div>
                </div>
            </main>
            <div className="flex w-[42px] flex-none flex-col gap-0.5 border-l-2 border-[#222b32] bg-[#20292f] pr-0.5 pt-1.5">
                <ScrollButton label="Zoom" className="h-[38px] w-full"><span className="h-1.5 w-1 bg-current"></span></ScrollButton>
                <ScrollButton label="Scroll up" className="h-[38px] w-full"><Chevron d="M1 12L8 4L15 12" /></ScrollButton>
                <div className="flex-1 bg-[repeating-linear-gradient(45deg,#363d44_0_2px,#3a4148_2px_4px)]">
                    <div className="h-[67px] border-2 border-[#656d74] bg-[#50585f]"></div>
                </div>
                <ScrollButton label="Scroll down" className="h-[31px] w-full"><Chevron d="M1 4L8 12L15 4" /></ScrollButton>
            </div>
        </div>
    )
}
